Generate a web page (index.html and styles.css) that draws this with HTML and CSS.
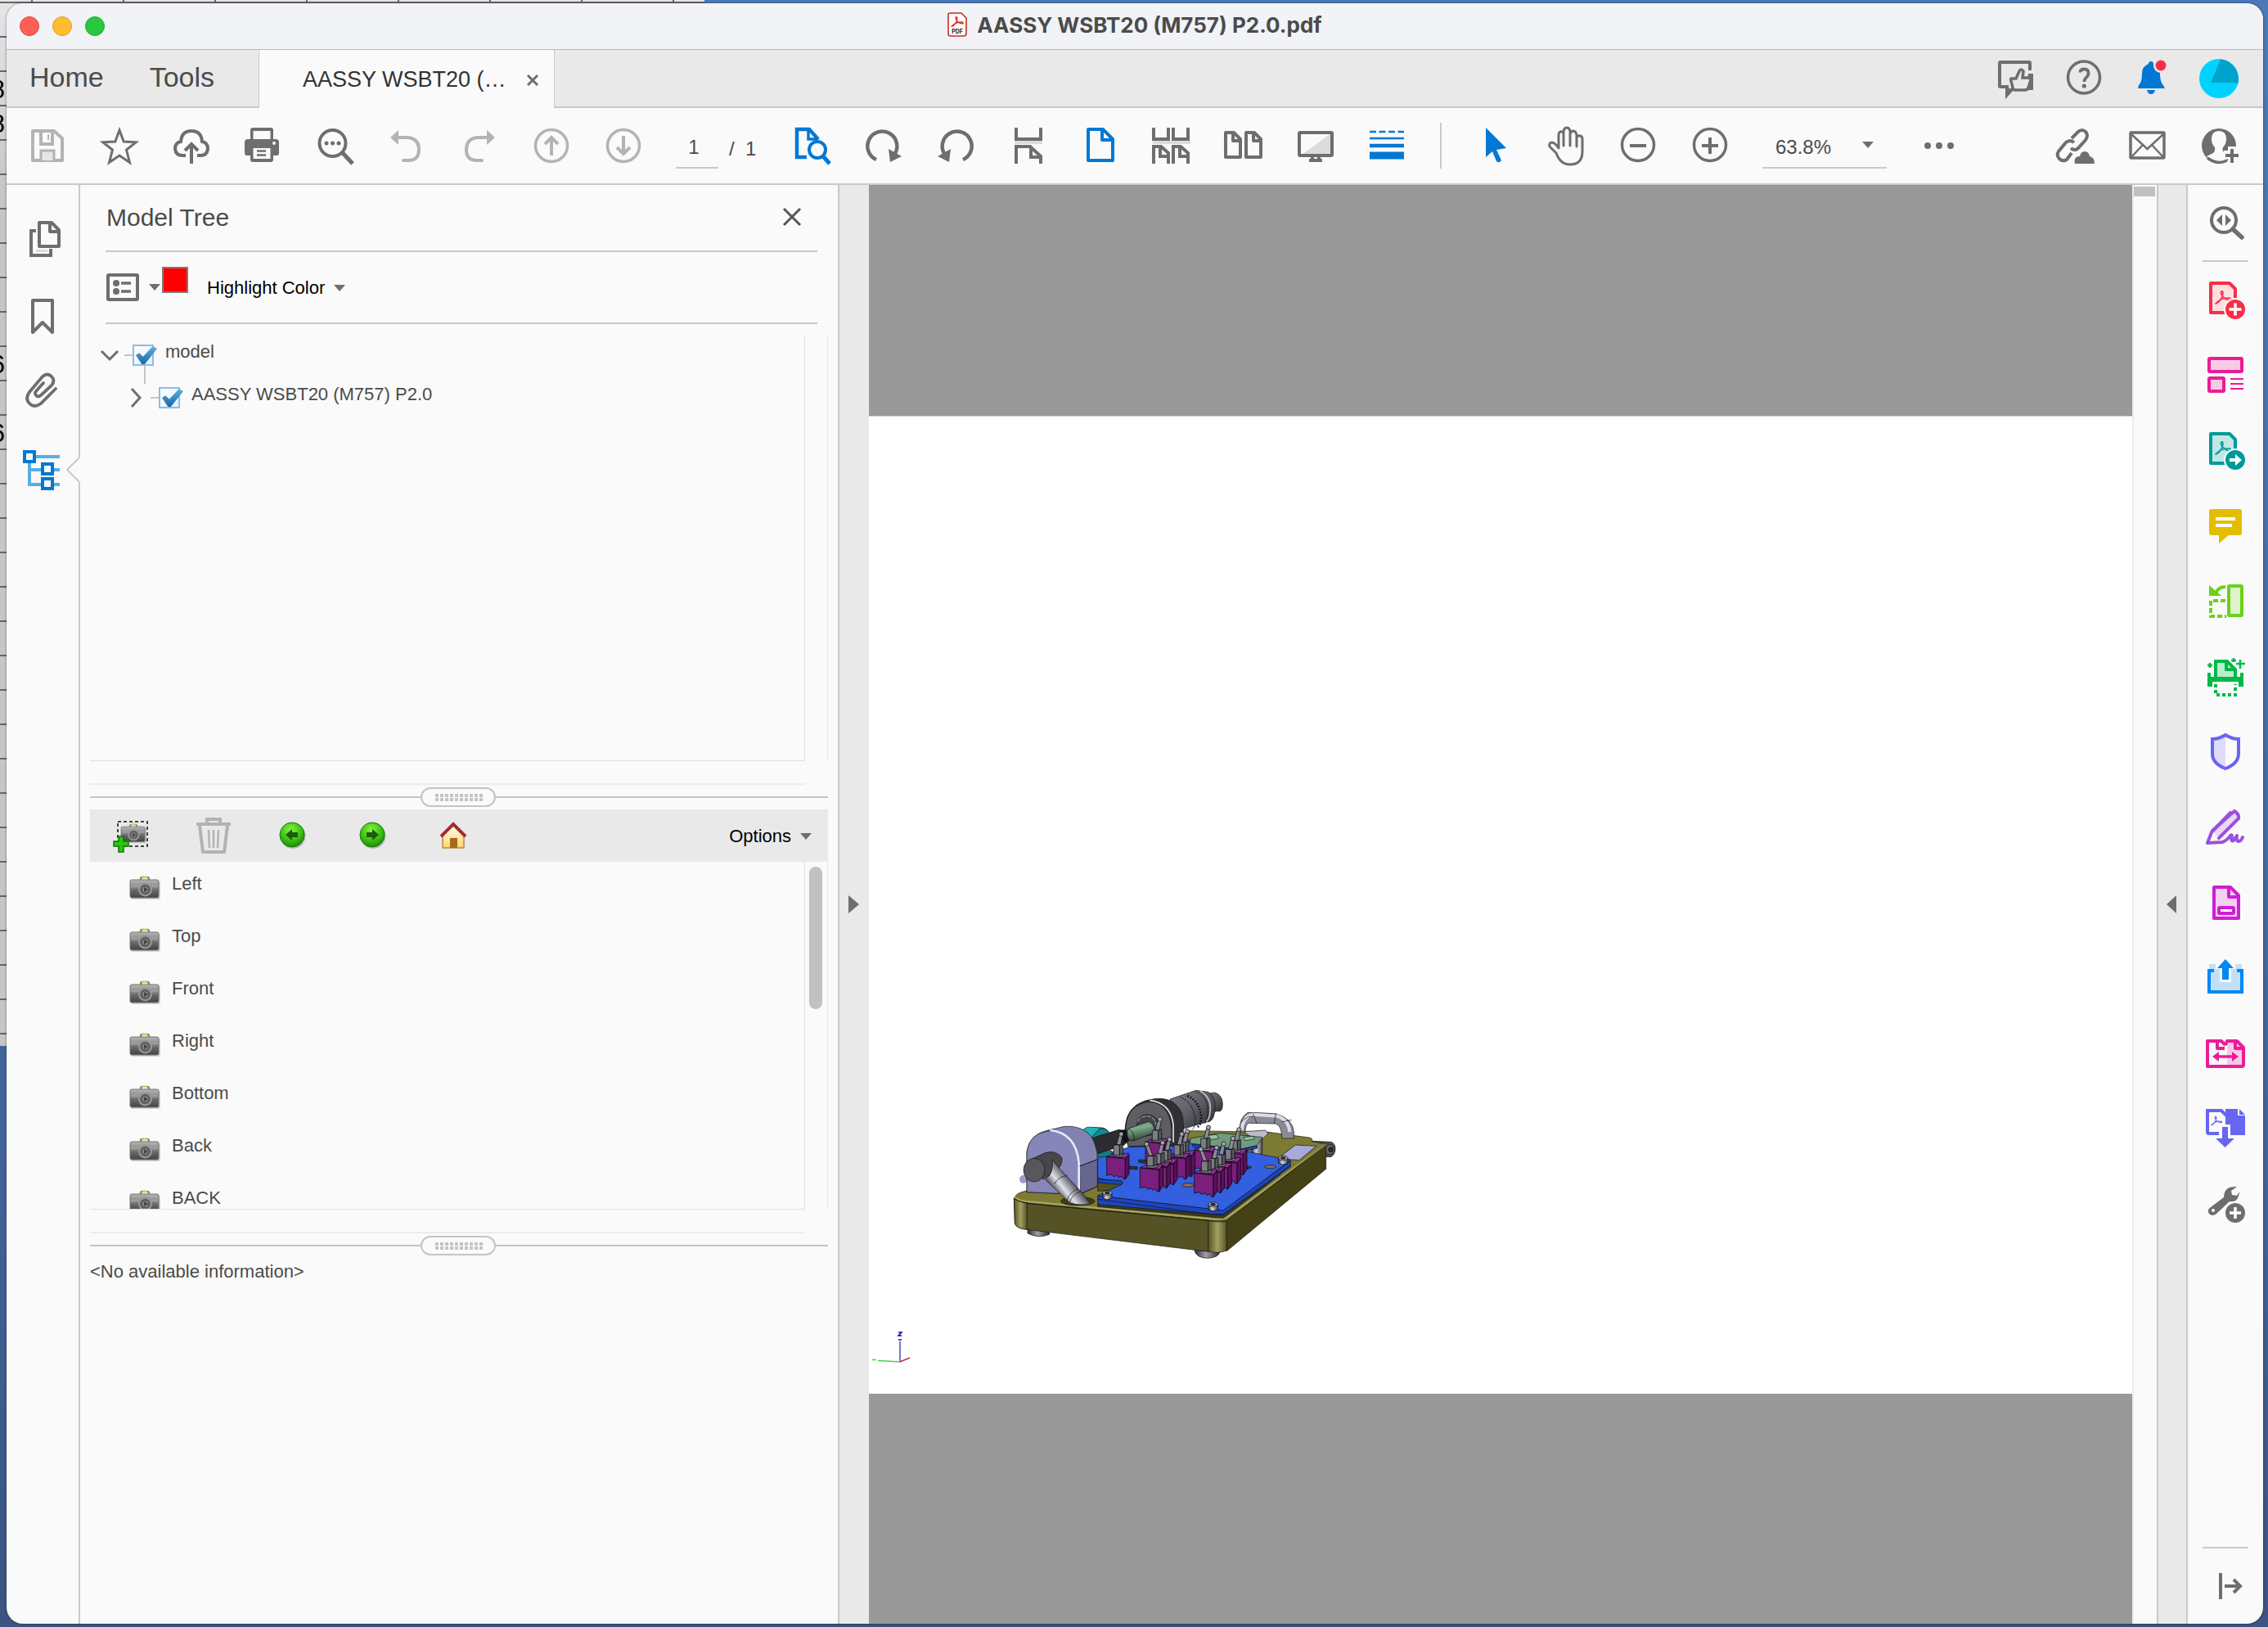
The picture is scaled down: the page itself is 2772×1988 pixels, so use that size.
FILE: index.html
```html
<!DOCTYPE html>
<html lang="en">
<head>
<meta charset="utf-8">
<title>AASSY WSBT20 (M757) P2.0.pdf</title>
<link rel="stylesheet" href="styles.css">
</head>
<body>
<svg class="defs" aria-hidden="true">
  <defs>
    <linearGradient id="camBody" x1="0" y1="0" x2="0" y2="1"><stop offset="0" stop-color="#b5b5b5"/><stop offset=".45" stop-color="#858585"/><stop offset=".55" stop-color="#6a6a6a"/><stop offset="1" stop-color="#444"/></linearGradient>
    <radialGradient id="greenBall" cx=".45" cy=".3" r=".8"><stop offset="0" stop-color="#8df04a"/><stop offset=".5" stop-color="#3fc412"/><stop offset="1" stop-color="#14780a"/></radialGradient>
    <linearGradient id="houseWall" x1="0" y1="0" x2="0" y2="1"><stop offset="0" stop-color="#fffdf0"/><stop offset="1" stop-color="#ffd66b"/></linearGradient>
    <symbol id="camera" viewBox="0 0 38 30">
      <rect x="2" y="7" width="36" height="22" rx="2" fill="#000" opacity=".15"/>
      <path d="M14 5V4q0-2 2-2h6q2 0 2 2v1" fill="none" stroke="#8f8f6a" stroke-width="2.500"/>
      <path d="M16 2.500h6" stroke="#f0e66a" stroke-width="2"/>
      <rect x="1" y="5" width="35" height="22" rx="2" fill="url(#camBody)" stroke="#777"/>
      <path d="M2 13h33" stroke="#c5c5c5" opacity=".6"/>
      <circle cx="19.500" cy="17" r="7.500" fill="#6c6c6c" stroke="#989898" stroke-width="2"/>
      <circle cx="19.500" cy="17" r="4.500" fill="#858585" stroke="#555" stroke-width="1.500"/>
      <path d="M18 14l5 3-5 3z" fill="#444"/>
    </symbol>
    <symbol id="acro" viewBox="0 0 20 18">
      <path d="M1 16c4-1 9-8 9-13 0-3-3-2.500-2.500 0 .6 4 6 8.500 10 8.500 2.500 0 2.500-2.500-.5-2.500-5 0-12 2-16 7z" fill="none" stroke="currentColor" stroke-width="1.700" stroke-linejoin="round"/>
    </symbol>
    <symbol id="grip" viewBox="0 0 92 24">
      <rect x="1" y="1" width="90" height="22" rx="11" fill="#fafafa" stroke="#c4c4c4" stroke-width="2"/>
      <path d="M18 10h58M18 15h58" stroke="#c4c4c4" stroke-width="4" stroke-dasharray="4 2"/>
    </symbol>
  </defs>
</svg>

<div class="sheet" aria-hidden="true">
  <div class="sheet-cells"><span>8</span><span>8</span><span class="skip">6</span><span class="next">6</span></div>
</div>

<div class="window">
  <header class="titlebar">
    <div class="lights"><button class="light red" aria-label="Close"></button><button class="light amber" aria-label="Minimize"></button><button class="light green" aria-label="Zoom"></button></div>
    <h1 class="title">
      <svg width="24" height="30" viewBox="0 0 24 30"><path d="M3 1h14l6 6v19q0 3-3 3H4q-3 0-3-3V3q0-2 2-2z" fill="#fff" stroke="#c0301c" stroke-width="1.600"/><svg x="4" y="5" width="16" height="14" color="#e2231a"><use href="#acro"/></svg><text x="12" y="25.500" text-anchor="middle" class="pdf-tag">PDF</text></svg>
      <span>AASSY WSBT20 (M757) P2.0.pdf</span>
    </h1>
  </header>

  <div class="tabbar">
    <nav class="nav"><a href="#home">Home</a><a href="#tools">Tools</a></nav>
    <div class="tab"><span class="tab-name">AASSY WSBT20 (…</span><button class="tab-close" aria-label="Close tab"><svg width="16" height="16" viewBox="0 0 16 16"><path d="M2 2l12 12M14 2L2 14" stroke="#6e6e6e" stroke-width="3"/></svg></button></div>
    <div class="account">
      <button class="icon" aria-label="Feedback"><svg viewBox="0 0 48 48"><path d="M42 14V5q0-1-1-1H6Q5 4 5 5v28q0 1 1 1h8v10l7-8" fill="none" stroke="#6e6e6e" stroke-width="4"/><path d="M13 33v14l8-8z" fill="#6e6e6e"/><path d="M40 18h6v20h-8z" fill="#6e6e6e"/><path d="M19 24h6l4-9q2-4 5 0l-1 8h7q3 0 3 3l-3 9q-1 3-4 3H24q-3 0-3-3l-2-8q-1-3 0-3z" fill="#e9e9e9" stroke="#6e6e6e" stroke-width="3.500"/></svg></button>
      <button class="icon" aria-label="Help"><svg viewBox="0 0 48 48"><circle cx="25" cy="22.500" r="19.500" fill="none" stroke="#6e6e6e" stroke-width="3.500"/><path d="M20.500 16.500q0-4 5-4t5 5q0 3-3 5.500-2 2-2 5" fill="none" stroke="#6e6e6e" stroke-width="3.800"/><circle cx="25.300" cy="33" r="2.600" fill="#6e6e6e"/></svg></button>
      <button class="icon" aria-label="Notifications"><svg viewBox="0 0 48 48"><path d="M21 6q0-3 3-3t3 3q8 3 8 12 0 10 4 14l2 4H8l1-4q4-4 4-14 0-9 8-12z" fill="#0078d4"/><path d="M19 38h10q-1 5-5 5t-5-5z" fill="#0078d4"/><circle cx="36" cy="8" r="9" fill="#e9e9e9"/><circle cx="36" cy="8" r="6.500" fill="#fa2d48"/></svg></button>
      <button class="icon" aria-label="Account"><svg viewBox="0 0 48 48"><circle cx="24" cy="24" r="24" fill="#00d2ff"/><path d="M26 0.500A24 24 0 0 1 47 31L44 29H14z" fill="#00a3cc"/></svg></button>
    </div>
  </div>

  <div class="toolbar">
    <div class="group">
      <button class="icon" aria-label="Save"><svg viewBox="0 0 48 48" fill="none" stroke="#b3b3b3" stroke-width="4"><path d="M6 6h26l10 9v27H6z" stroke-linejoin="round"/><path d="M16 6v16h14V6"/><path d="M25 10v7" stroke-width="2"/><path d="M16 42V30h16v12" fill="#e6e6e6" stroke-width="3"/></svg></button>
      <button class="icon" aria-label="Star"><svg viewBox="0 0 48 48"><path d="M24 5l5.200 14 15 .7-11.700 9.300 4 15.500L24 36l-12.500 8.500 4-15.500L3.800 19.700l15-.7z" fill="none" stroke="#6e6e6e" stroke-width="3"/></svg></button>
      <button class="icon" aria-label="Upload"><svg viewBox="0 0 48 48" fill="none" stroke="#6e6e6e" stroke-width="4"><path d="M17 36h-4q-8 0-9-8 0-8 7-9 1-13 13-13t13 13q7 1 7 9-1 8-9 8h-4"/><path d="M24 46V23M16 30l8-8 8 8"/></svg></button>
      <button class="icon" aria-label="Print"><svg viewBox="0 0 48 48"><path d="M8 16V5q0-3 3-3h22q3 0 3 3v11h3q4 0 4 4v13q0 3-3 3h-4v5q0 3-3 3H11q-3 0-3-3v-5H4q-3 0-3-3V20q0-4 4-4z" fill="#6e6e6e"/><path d="M11.500 6h21v10h-21zM11.500 27h21v13h-21z" fill="#fafafa"/><path d="M16 30.500h11M16 35.500h11" stroke="#6e6e6e" stroke-width="2.500"/><circle cx="37" cy="21" r="2" fill="#fafafa"/></svg></button>
      <button class="icon" aria-label="Find"><svg viewBox="0 0 48 48"><circle cx="20.500" cy="21" r="16" fill="none" stroke="#6e6e6e" stroke-width="4"/><path d="M32 32l13 14" stroke="#6e6e6e" stroke-width="5"/><g fill="#6e6e6e"><circle cx="13" cy="21" r="2.500"/><circle cx="20.500" cy="21" r="2.500"/><circle cx="28" cy="21" r="2.500"/></g></svg></button>
      <button class="icon" aria-label="Undo"><svg viewBox="0 0 48 48"><path d="M10 14h14q14 1 14 15 0 13-13 13h-6" fill="none" stroke="#b3b3b3" stroke-width="4" stroke-linecap="round"/><path d="M3 14l10-9v18z" fill="#b3b3b3"/></svg></button>
      <button class="icon" aria-label="Redo"><svg viewBox="0 0 48 48"><path d="M36 14H22Q8 15 8 29q0 13 13 13h6" fill="none" stroke="#b3b3b3" stroke-width="4" stroke-linecap="round"/><path d="M43 14L33 5v18z" fill="#b3b3b3"/></svg></button>
      <button class="icon" aria-label="Previous page"><svg viewBox="0 0 48 48" fill="none" stroke="#b3b3b3" stroke-width="3.500"><circle cx="24" cy="24" r="19.500"/><path d="M24 36V14M16 22l8-8 8 8" stroke-width="4"/></svg></button>
      <button class="icon" aria-label="Next page"><svg viewBox="0 0 48 48" fill="none" stroke="#b3b3b3" stroke-width="3.500"><circle cx="24" cy="24" r="19.500"/><path d="M24 12v22M16 26l8 8 8-8" stroke-width="4"/></svg></button>
    </div>
    <div class="pager"><input class="page-input" aria-label="Page number" value="1"><span class="page-total">/&nbsp; 1</span></div>
    <div class="group">
      <button class="icon" aria-label="Search page"><svg viewBox="0 0 48 48" fill="none" stroke="#0078d4" stroke-width="4.500"><path d="M18 38H6V4h15l10 11v1"/><path d="M20 4v12h12" stroke-width="3.500"/><circle cx="31" cy="29" r="10" stroke-width="4"/><path d="M38 37l8 9" stroke-width="5"/></svg></button>
      <button class="icon" aria-label="Rotate clockwise"><svg viewBox="0 0 48 48"><path d="M15 41A18 18 0 1 1 37 35" fill="none" stroke="#6e6e6e" stroke-width="4.500"/><path d="M30 28l16 9-14 7z" fill="#6e6e6e"/></svg></button>
      <button class="icon" aria-label="Rotate counterclockwise"><svg viewBox="0 0 48 48"><path d="M33 41A18 18 0 1 0 11 35" fill="none" stroke="#6e6e6e" stroke-width="4.500"/><path d="M18 28L2 37l14 7z" fill="#6e6e6e"/></svg></button>
      <button class="icon" aria-label="Fit width"><svg viewBox="0 0 48 48"><path d="M8 18h34v4H8z" fill="#dcdcdc"/><path d="M10 2v14h30V2M10 46V25h17l13 12v9M28 25v13h11" fill="none" stroke="#6e6e6e" stroke-width="4"/></svg></button>
      <button class="icon" aria-label="Single page"><svg viewBox="0 0 48 48"><path d="M10 4h18l12 12v26H10zM27 4v13h13" fill="none" stroke="#0078d4" stroke-width="4" stroke-linejoin="round"/></svg></button>
      <button class="icon" aria-label="Two page scrolling"><svg viewBox="0 0 48 48"><path d="M1 18h46v4H1z" fill="#dcdcdc"/><path d="M2 2v14h18V2M26 2v14h18V2M2 46V25h9l9 8v13M10 25v12h9M26 46V25h9l9 8v13M34 25v12h9" fill="none" stroke="#6e6e6e" stroke-width="4"/></svg></button>
      <button class="icon" aria-label="Two page view"><svg viewBox="0 0 48 48"><path d="M2 8h10l8 8v22H2zM11 8v10h8M27 8h10l8 8v22H27zM36 8v10h8" fill="none" stroke="#6e6e6e" stroke-width="4" stroke-linejoin="round"/></svg></button>
      <button class="icon" aria-label="Full screen"><svg viewBox="0 0 48 48"><path d="M43 9v25H8z" fill="#dcdcdc"/><rect x="4" y="8" width="40" height="28" rx="1" fill="none" stroke="#6e6e6e" stroke-width="4"/><path d="M16 42h16M20 36v6M28 36v6" stroke="#6e6e6e" stroke-width="4"/></svg></button>
      <button class="icon" aria-label="Line weights"><svg viewBox="0 0 48 48" stroke="#0078d4"><path d="M2 7h42" stroke-width="2.500" stroke-dasharray="8 3.500"/><path d="M2 15h42" stroke-width="2.500"/><path d="M2 24h42" stroke-width="4.500"/><path d="M2 36h42" stroke-width="9"/></svg></button>
    </div>
    <div class="divider"></div>
    <div class="group">
      <button class="icon" aria-label="Select"><svg viewBox="0 0 48 48"><path d="M14 2l25 25-12 2 6 13q-3 4-6 1l-5-12-8 7z" fill="#0078d4"/></svg></button>
      <button class="icon" aria-label="Hand"><svg viewBox="0 0 48 48"><path d="M12 33L4 25q-1-5 3-5 3 0 8 7V10q1-4 4-3 2 0 2 4V6q1-4 4-4t4 4v4q1-4 4-4t4 5v4q1-4 4-3 3 0 3 4v15q0 16-15 16-12 0-17-14zM21 10v14M29 9v15M37 12v13" fill="none" stroke="#6e6e6e" stroke-width="3" stroke-linecap="round" stroke-linejoin="round"/></svg></button>
      <button class="icon" aria-label="Zoom out"><svg viewBox="0 0 48 48" fill="none" stroke="#6e6e6e" stroke-width="3.500"><circle cx="24" cy="23" r="19.500"/><path d="M14 24h20" stroke-width="4"/></svg></button>
      <button class="icon" aria-label="Zoom in"><svg viewBox="0 0 48 48" fill="none" stroke="#6e6e6e" stroke-width="3.500"><circle cx="24" cy="23" r="19.500"/><path d="M14 24h20M24 14v20" stroke-width="4"/></svg></button>
    </div>
    <div class="zoom"><select class="zoom-select" aria-label="Zoom level"><option>63.8%</option></select><svg class="caret" viewBox="0 0 14 8"><path d="M0 0h14L7 8z"/></svg></div>
    <button class="icon" aria-label="More tools"><svg viewBox="0 0 48 48" fill="#6e6e6e"><circle cx="10" cy="24" r="4"/><circle cx="24" cy="24" r="4"/><circle cx="38" cy="24" r="4"/></svg></button>
    <div class="group share">
      <button class="icon" aria-label="Share link"><svg viewBox="0 0 48 48" fill="none" stroke="#6e6e6e" stroke-width="4"><path d="M20 15l8-8q5-4 9 0t0 10l-9 10q-4 4-9 0M20 33l-6 8q-5 3-9-1t-1-9l9-11q5-4 10 0"/><path d="M24 46q-2-9 6-9 1-6 6-6t6 6q6 1 6 9z" fill="#6e6e6e" stroke="none"/></svg></button>
      <button class="icon" aria-label="Email"><svg viewBox="0 0 48 48" fill="none" stroke="#6e6e6e" stroke-width="3.500"><rect x="4" y="8" width="41" height="31" rx="1"/><path d="M5 10l19.500 18L44 10M5 38l14-15M44 38L30 23" stroke-width="2.500"/></svg></button>
      <button class="icon" aria-label="Invite people"><svg viewBox="0 0 48 48"><circle cx="24" cy="24" r="21" fill="#6e6e6e"/><path d="M24 6q9 0 9 10 0 6-4 10-2 5 3 7l6 2-6 8q-8 3-17-1l-6-5 6-3q5-2 4-8-4-4-4-10 0-10 9-10z" fill="#fafafa"/><path d="M10 39q12 9 24 3" stroke="#6e6e6e" stroke-width="3.500" fill="none"/><path d="M30 35h20M40 25v24" stroke="#fafafa" stroke-width="10"/><path d="M32 36h16M40 28v17" stroke="#6e6e6e" stroke-width="4"/></svg></button>
    </div>
  </div>

  <main class="body">
    <aside class="rail-left">
      <button class="icon" aria-label="Page thumbnails"><svg viewBox="0 0 48 48" fill="none" stroke="#6e6e6e" stroke-width="4"><path d="M16 37h14v3H16z" fill="#dcdcdc" stroke="none"/><path d="M16 14h-6v30h24v-8"/><path d="M20 4h15l9 9v20H20zM33 4v11h11" stroke-linejoin="round"/></svg></button>
      <button class="icon" aria-label="Bookmarks"><svg viewBox="0 0 48 48" fill="none" stroke="#6e6e6e" stroke-width="4"><path d="M12 44V5h24v39L24 32z" stroke-linejoin="round"/></svg></button>
      <button class="icon" aria-label="Attachments"><svg viewBox="0 0 48 48" fill="none" stroke="#6e6e6e" stroke-width="3.800" stroke-linecap="round"><path d="M40 19L22 37q-8 6-14 0t0-14L24 4q6-5 11 0t0 11L22 27q-4 3-6 0t0-5l9-10"/></svg></button>
      <button class="icon active" aria-label="Model tree"><svg viewBox="0 0 48 48" fill="none"><path d="M14 8h31M8 14v28h14M8 24h37M32 42h13" stroke="#57aee6" stroke-width="4"/><g fill="#fafafa" stroke="#0078d4" stroke-width="4"><path d="M2 2h12v12H2zM24 17h12v12H24zM24 35h12v12H24z"/></g></svg><svg class="notch" viewBox="0 0 18 32"><path d="M18 0L2 16l16 16z" fill="#fafafa"/><path d="M17 1L2 16l15 15" fill="none" stroke="#c8c8c8" stroke-width="2"/></svg></button>
    </aside>

    <section class="panel">
      <div class="panel-head"><h2>Model Tree</h2><button class="panel-close" aria-label="Close panel"><svg viewBox="0 0 24 24"><path d="M2 2l20 20M22 2L2 22" stroke="#555" stroke-width="3"/></svg></button></div>
      <div class="panel-tools">
        <button class="list-btn" aria-label="Tree options"><svg width="40" height="34" viewBox="0 0 40 34"><rect x="2" y="2" width="36" height="30" rx="1" fill="none" stroke="#6e6e6e" stroke-width="4"/><circle cx="12" cy="12" r="4" fill="#6e6e6e"/><circle cx="12" cy="22" r="4" fill="#6e6e6e"/><path d="M18 12h12M18 22h12" stroke="#6e6e6e" stroke-width="3.500"/></svg><svg class="caret" viewBox="0 0 14 8"><path d="M0 0h14L7 8z"/></svg></button>
        <button class="swatch" aria-label="Highlight color swatch"></button>
        <button class="text-btn highlight">Highlight Color<svg class="caret" viewBox="0 0 14 8"><path d="M0 0h14L7 8z"/></svg></button>
      </div>

      <div class="pane tree-pane">
        <ul class="tree">
          <li><div class="node"><svg class="chev" viewBox="0 0 24 24"><path d="M2 7l10 10L22 7" fill="none" stroke="#6e6e6e" stroke-width="3"/></svg><span class="dash"></span><input type="checkbox" id="n1" checked><label for="n1">model</label></div>
            <ul class="branch">
              <li><div class="node"><svg class="chev" viewBox="0 0 24 24"><path d="M7 1l10 11L7 23" fill="none" stroke="#6e6e6e" stroke-width="3"/></svg><span class="dash"></span><input type="checkbox" id="n2" checked><label for="n2">AASSY WSBT20 (M757) P2.0</label></div></li>
            </ul>
          </li>
        </ul>
        <div class="track"></div>
      </div>
      <div class="hscroll"></div>
      <div class="splitter"><svg width="92" height="24"><use href="#grip"/></svg></div>

      <div class="views-bar">
        <button class="icon" aria-label="Add view"><svg viewBox="0 0 48 48"><rect x="7" y="7" width="36" height="30" fill="none" stroke="#444" stroke-width="2" stroke-dasharray="4 3"/><svg x="10" y="9" width="32" height="25"><use href="#camera"/></svg><path d="M8 25h6v6h6v6h-6v7H8v-7H2v-6h6z" fill="#2fc410" stroke="#0d7a06" stroke-width="1.500"/></svg></button>
        <button class="icon" aria-label="Delete view"><svg viewBox="0 0 48 48" fill="none" stroke="#b3b3b3"><path d="M5 10h42M18 9V4h16v5" stroke-width="4"/><path d="M9 12l4 32h26l4-32" stroke-width="4"/><path d="M20 17l1 22M26 17v22M32 17l-1 22" stroke-width="2.500"/></svg></button>
        <button class="icon" aria-label="Previous view"><svg viewBox="0 0 48 48"><circle cx="25" cy="24.500" r="15.500" fill="#000" opacity=".2"/><circle cx="24" cy="23" r="15" fill="url(#greenBall)" stroke="#127509"/><path d="M16 23l8-7v4h7v6h-7v4z" fill="#1c5c0c"/></svg></button>
        <button class="icon" aria-label="Next view"><svg viewBox="0 0 48 48"><circle cx="25" cy="24.500" r="15.500" fill="#000" opacity=".2"/><circle cx="24" cy="23" r="15" fill="url(#greenBall)" stroke="#127509"/><path d="M32 23l-8-7v4h-7v6h7v4z" fill="#1c5c0c"/></svg></button>
        <button class="icon" aria-label="Home view"><svg viewBox="0 0 48 48"><path d="M12 23L25 11l13 12v16H12z" fill="url(#houseWall)" stroke="#b5894a" stroke-width="1.500"/><path d="M21 27h9v12h-9z" fill="#a5691a"/><path d="M10 25L25 10l15 15" fill="none" stroke="#a32a33" stroke-width="4"/></svg></button>
        <button class="text-btn options">Options<svg class="caret" viewBox="0 0 14 8"><path d="M0 0h14L7 8z"/></svg></button>
      </div>
      <div class="pane views-pane">
        <ul class="views">
          <li><svg><use href="#camera"/></svg><span>Left</span></li>
          <li><svg><use href="#camera"/></svg><span>Top</span></li>
          <li><svg><use href="#camera"/></svg><span>Front</span></li>
          <li><svg><use href="#camera"/></svg><span>Right</span></li>
          <li><svg><use href="#camera"/></svg><span>Bottom</span></li>
          <li><svg><use href="#camera"/></svg><span>Back</span></li>
          <li><svg><use href="#camera"/></svg><span>BACK</span></li>
        </ul>
        <div class="track"><div class="thumb"></div></div>
      </div>
      <div class="hscroll"></div>
      <div class="splitter"><svg width="92" height="24"><use href="#grip"/></svg></div>
      <p class="info">&lt;No available information&gt;</p>
    </section>

    <button class="collapse left" aria-label="Collapse navigation pane"><svg width="14" height="22" viewBox="0 0 14 22"><path d="M0 0l13 11L0 22z" fill="#6e6e6e"/></svg></button>

    <section class="viewer">
      <div class="page">
        <svg class="model" viewBox="0 0 1320 720" role="img" aria-label="3D model of the assembly">
          <defs>
            <linearGradient id="oliveCorner"><stop offset="0" stop-color="#55531f"/><stop offset=".5" stop-color="#a3a160"/><stop offset="1" stop-color="#55531f"/></linearGradient>
            <linearGradient id="steel"><stop offset="0" stop-color="#3c3c42"/><stop offset=".4" stop-color="#d8d8e4"/><stop offset="1" stop-color="#44444c"/></linearGradient>
            <linearGradient id="foot"><stop offset="0" stop-color="#2c2c30"/><stop offset=".45" stop-color="#a0a0a6"/><stop offset="1" stop-color="#2c2c30"/></linearGradient>
            <linearGradient id="arm" gradientUnits="userSpaceOnUse" x1="200" y1="425" x2="262" y2="375"><stop offset="0" stop-color="#4a4a50"/><stop offset=".4" stop-color="#e2e2ee"/><stop offset="1" stop-color="#3c3c42"/></linearGradient>
            <linearGradient id="barrel" x1="0" y1="0" x2="1" y2="1"><stop offset="0" stop-color="#77777f"/><stop offset=".4" stop-color="#65656d"/><stop offset="1" stop-color="#2b2b30"/></linearGradient>
            <linearGradient id="greenRod" x1="0" y1="0" x2=".3" y2="1"><stop offset="0" stop-color="#4e6d57"/><stop offset=".4" stop-color="#7fae8c"/><stop offset="1" stop-color="#33473a"/></linearGradient>
            <g id="switch" stroke="#000" stroke-width="2">
              <path d="M0 45l25-12h57l-14 16z" fill="#9a2f9c"/>
              <path d="M0 45l68 8v75l-8-2-4-10-12 6-6-8-12 4-10-8-16 4z" fill="#7b1f7e"/>
              <path d="M68 53l14-15v70l-14 20z" fill="#561259"/>
              <ellipse cx="42" cy="39" rx="20" ry="7" fill="#77777f"/>
              <path d="M25 2h22v37H25z" fill="#7c7c84"/><path d="M47 2l12-4v36l-12 5z" fill="#55555c"/>
              <path d="M36 0l10-36 12 3-7 35z" fill="#8b8b93"/><circle cx="53" cy="-38" r="8" fill="#a4a4ac"/>
            </g>
            <g id="switchL" stroke="#000" stroke-width="2">
              <path d="M0 45l25-12h60l-14 16z" fill="#9a2f9c"/>
              <path d="M0 45l70 8v80l-8-2-4-10-12 6-6-8-12 4-10-8-18 4z" fill="#7b1f7e"/>
              <path d="M70 53l15-15v72l-15 22z" fill="#561259"/>
              <ellipse cx="44" cy="39" rx="22" ry="7" fill="#77777f"/>
              <path d="M26 2h24v36H26z" fill="#7c7c84"/><path d="M50 2l12-4v35l-12 5z" fill="#55555c"/>
              <path d="M33 1L20-36l11-5 16 40z" fill="#8b8b93"/><circle cx="24" cy="-42" r="8" fill="#a4a4ac"/>
            </g>
            <g id="bolt" stroke="#000" stroke-width="2"><path d="M-17 0v18q17 12 34 0V0z" fill="url(#steel)"/><ellipse rx="17" ry="8" fill="#b8b8c0"/><ellipse rx="9" ry="4" fill="#333"/></g>
          </defs>
          <g stroke="#111" stroke-width="2" stroke-linejoin="round">
            <path d="M108 572v16q38 20 80 4v-14z" fill="url(#foot)"/>
            <path d="M720 650q5 28 48 29 42-2 45-25z" fill="url(#foot)"/>
            <path d="M1150 250l70 3q16 5 16 25t-16 30l-30-2z" fill="#4b4b52"/><circle cx="1216" cy="281" r="18" fill="#66666e"/><circle cx="1220" cy="281" r="9" fill="#2b2b30"/>
            <path d="M60 462q0-22 45-30l600-220 285 5 150 20q16 4 10 14l42 8q12 5 10 16L838 545l-68-4-664-63q-46-6-46-16z" fill="#7d7b33"/>
            <path d="M58 460q8 14 48 19l664 62v114L106 574q-42-4-45-24z" fill="#555325"/>
            <path d="M58 458q8 12 48 18v98q-42-4-45-24z" fill="url(#oliveCorner)"/>
            <path d="M770 541q42 10 68 2v108q-30 12-68 3z" fill="url(#oliveCorner)"/>
            <path d="M838 543l364-278v87L838 653z" fill="#444116"/>
            <path d="M60 454q12 14 50 17l662 63q40 6 64-2l366-270" fill="none" stroke="#aaa863" stroke-width="6"/>
            <path d="M62 460q12 14 48 18l662 63q40 6 66-2l364-276" fill="none"/>
            <path d="M365 490l460 42 210-160V350L825 520 365 480z" fill="#3f3d18"/>
            <path d="M1025 314l65-50 76 4-62 52z" fill="#a9a9dc"/>
            <path d="M885 215q-2-50 30-70 40 0 105 5 60 18 64 66v24h-44q0-50-24-54l-98-2q-12 4-12 36z" fill="#8a8a94"/>
            <path d="M893 210q4-50 40-58l90 6q42 14 46 58" fill="none" stroke="#dcdce8" stroke-width="12"/>
            <path d="M891 180q24-24 44-20M1018 148l-6 37M934 148l14 36M1040 180l36-8" fill="none"/>
            <path d="M900 215l80-5 10 12-34 34z" fill="#bcbcc8"/>
            <path d="M930 240h38v72h-38z" fill="url(#steel)"/>
            <path d="M480 272l210-28 382 76-247 186-460-56 90-45-90-20V305z" fill="#3260e0"/>
            <path d="M365 450l460 54 247-182v22L825 522 365 482z" fill="#1f45bd"/>
            <path d="M365 463l415 55h45l247-180" fill="none"/>
            <path d="M365 389l85 6q12 6 2 14l-48 22-39 2z" fill="#55531f"/>
            <path d="M365 389l85 6q12 6 2 14-40 0-87-8z" fill="#1c43bd"/>
            <path d="M705 240l110-20 155 16-22 30-60 14-185-22z" fill="#6f9c7e"/><path d="M710 262l180 18 60-14v10l-62 14-170-16z" fill="#1c43bd"/>
            <path d="M760 230l40-4 10 14-40 6zM900 236l36-4 4 10-34 6z" fill="#9fc3ab"/>
            <path d="M310 210q10-14 35-11l38 2q25 6 24 30l-32 36-30-12z" fill="#1fb3b5"/><path d="M340 238l32-34q28-4 36 20l-34 40z" fill="#16898c"/><path d="M365 265l52 22v18l-52 4z" fill="#118084"/>
            <path d="M740 80l55-8q28 10 28 42t-20 26l-60 10z" fill="url(#barrel)"/>
            <path d="M630 96l95-32 45 6q32 20 24 70-4 40-30 40l-95 28z" fill="url(#barrel)"/>
            <path d="M694 84q42 18 50 72 2 38-18 44" fill="none" stroke-width="8" stroke-dasharray="5 6"/>
            <path d="M668 88q46 20 54 74 2 36-10 46M724 68q40 14 44 58 2 44-12 60" fill="none"/>
            <path d="M740 66q36 18 38 60 0 40-14 52" fill="none" stroke="#bcbccb" stroke-width="5"/>
            <path d="M466 240v-45q6-70 70-92 100-30 135 40 8 20 8 50v50l-30 25-170 3z" fill="#303035"/>
            <path d="M468 200q4-82 84-94 74 2 84 96v60l-160 8z" fill="#5d5d63"/>
            <path d="M556 100q76 10 86 88v66" fill="none" stroke="#e2e2ea" stroke-width="5"/>
            <path d="M508 192q6-40 38-40 40 2 42 44l-20 30-50 10z" fill="#44444a"/><path d="M512 178q10-20 36-20 28 4 32 36" fill="none" stroke="#b4b4be" stroke-width="3" stroke-dasharray="16 4"/>
            <path d="M340 240l102-32q30 0 34 30-2 18-14 26l-96 32z" fill="#2c2c30"/>
            <path d="M445 214l20-6q16 14 14 40l-18 6z" fill="#111"/>
            <path d="M478 204l72-26q22 6 24 40l-76 30q-10 2-16 0-16-22-4-44z" fill="url(#greenRod)"/><path d="M478 204q22 12 20 44" fill="none"/>
            <ellipse cx="92" cy="390" rx="14" ry="15" fill="#9a9ad0" stroke="none"/>
            <path d="M105 437V290q10-66 78-80l60-14q90-4 112 66 9 25 9 60v95l-64 28z" fill="#8282b2"/>
            <path d="M298 342l66-25v98l-64 28z" fill="#66668f"/>
            <path d="M105 437V290q10-74 92-78 92 8 100 120v113z" fill="#8686b8"/>
            <path d="M190 210q96 10 106 120v112" fill="none" stroke="#e8e8ff" stroke-width="8"/><path d="M298 342l66-25" fill="none"/>
            <ellipse cx="292" cy="470" rx="62" ry="16" fill="#3f3d18"/>
            <path d="M118 318l56-26q40-10 60 20 4 30-30 52l-40 26z" fill="#46464c"/>
            <path d="M198 318l30 36 84 90 26 36q-36 8-76-4L172 390q34-20 26-72z" fill="url(#arm)"/>
            <path d="M206 408q12-28 48-32M252 468q8-30 42-44M262 474q10-30 40-40" fill="none"/>
            <ellipse cx="132" cy="356" rx="39" ry="43" fill="#57575d"/>
            <g fill="#333"><path d="M480 342l30 2v10l-30-2zM515 318l40 2-10 12-30-4z"/></g>
            <ellipse cx="696" cy="411" rx="22" ry="7" fill="#8a6a5a"/><ellipse cx="998" cy="344" rx="22" ry="6" fill="#8a6a5a"/><ellipse cx="910" cy="346" rx="18" ry="5" fill="#333"/>
          </g>
          <use href="#switch" x="540" y="208"/>
          <use href="#switch" x="718" y="238"/>
          <use href="#switch" x="398" y="262"/>
          <use href="#switch" x="640" y="252"/>
          <use href="#switch" x="620" y="262"/>
          <use href="#switch" x="575" y="282"/>
          <use href="#switch" x="550" y="294"/>
          <use href="#switchL" x="520" y="303"/>
          <use href="#switch" x="830" y="246"/>
          <use href="#switch" x="808" y="278"/>
          <use href="#switch" x="774" y="298"/>
          <use href="#switch" x="748" y="312"/>
          <use href="#switchL" x="719" y="322"/>
          <use href="#bolt" x="400" y="440"/>
          <use href="#bolt" x="788" y="482"/>
          <use href="#bolt" x="1045" y="312"/>
        </svg>
        <svg class="axes" width="60" height="44" viewBox="0 0 60 44" fill="none"><path d="M38 37V12" stroke="#4a4ac0" stroke-width="1.500"/><path d="M36 10h4M36 1h4l-4 4h4" stroke="#1010a0" stroke-width="1.500"/><path d="M38 37L11 35.500M9 34.500H4" stroke="#4ecb4e" stroke-width="1.500"/><path d="M38 37l12-5" stroke="#c23030" stroke-width="1.500"/></svg>
      </div>
    </section>
    <div class="doc-scroll"><div class="doc-thumb"></div></div>
    <button class="collapse right" aria-label="Collapse tools pane"><svg width="12" height="22" viewBox="0 0 12 22"><path d="M12 0L0 11l12 11z" fill="#6e6e6e"/></svg></button>

    <aside class="rail-right">
      <button class="icon" aria-label="Search tools"><svg viewBox="0 0 48 48"><circle cx="22" cy="21" r="15" fill="none" stroke="#6e6e6e" stroke-width="4"/><path d="M33 32l11 10" stroke="#6e6e6e" stroke-width="5.500" stroke-linecap="round"/><path d="M20 14v14l-7-7zM24 14v14l7-7z" fill="#6e6e6e"/></svg></button>
      <hr>
      <div class="tools">
        <button class="icon" aria-label="Create PDF"><svg viewBox="0 0 48 48" color="#fa2d48"><path d="M6 3h23l7 7v29H6z" fill="#fddfe2" stroke="#fa2d48" stroke-width="4" stroke-linejoin="round"/><svg x="11" y="10" width="20" height="22"><use href="#acro"/></svg><circle cx="36" cy="35" r="14" fill="#fafafa"/><circle cx="36" cy="35" r="12" fill="#fa2d48"/><path d="M28.500 35h15M36 27.500v15" stroke="#fff" stroke-width="3.500"/></svg></button>
        <button class="icon" aria-label="Edit PDF"><svg viewBox="0 0 48 48" fill="#f7cbe6" stroke="#ec1c95" stroke-width="4"><rect x="4" y="3" width="40" height="16" rx="1"/><rect x="4" y="27" width="18" height="16" rx="1"/><path d="M30 28h16M30 34h16M30 40h16" stroke-width="2"/></svg></button>
        <button class="icon" aria-label="Export PDF"><svg viewBox="0 0 48 48" color="#009a9a"><path d="M6 3h23l7 7v29H6z" fill="#c0e6e6" stroke="#009a9a" stroke-width="4" stroke-linejoin="round"/><svg x="11" y="10" width="20" height="22"><use href="#acro"/></svg><circle cx="36" cy="35" r="14" fill="#fafafa"/><circle cx="36" cy="35" r="12" fill="#009a9a"/><path d="M29 33h7v-5l8 7-8 7v-5h-7z" fill="#fff"/></svg></button>
        <button class="icon" aria-label="Comment"><svg viewBox="0 0 48 48"><path d="M7 3h34q3 0 3 3v26q0 3-3 3H28L16 45V35H7q-3 0-3-3V6q0-3 3-3z" fill="#e5bd00"/><path d="M12 15h24M12 23h20" stroke="#fff" stroke-width="4"/></svg></button>
        <button class="icon" aria-label="Organize pages"><svg viewBox="0 0 48 48" fill="none" stroke="#6bd11a"><rect x="28" y="5" width="16" height="36" rx="1" fill="#def3cc" stroke-width="4"/><path d="M24 23H6v19h19" stroke-width="4" stroke-dasharray="6 3"/><path d="M24 6q-9 0-12 8" stroke-width="4"/><path d="M4 4v13h15z" fill="#6bd11a" stroke="none"/></svg></button>
        <button class="icon" aria-label="Scan and OCR"><svg viewBox="0 0 48 48" fill="none" stroke="#00b84a" stroke-width="4"><path d="M12 24V5h14l10 10v9" fill="#b9edcd"/><path d="M25 5v10h11"/><path d="M2 19h4v5h36v-5h4v17h-6v-6H8v6H2z" fill="#00b84a" stroke="none"/><path d="M12 33v13h24V33" stroke-dasharray="4 3"/><path d="M5 7v6M2 10h6M34 1v5M31 4h6M42 3v11M37 8h11" stroke-width="2.500"/></svg></button>
        <button class="icon" aria-label="Protect"><svg viewBox="0 0 48 48"><path d="M24 4v39Q8 36 8 26V9q9 0 16-5z" fill="#dedcfa"/><path d="M24 3q8 5 16 5v18q0 12-16 18Q8 38 8 26V8q8 0 16-5z" fill="none" stroke="#6865f0" stroke-width="4"/></svg></button>
        <button class="icon" aria-label="Fill and sign"><svg viewBox="0 0 48 48" fill="none" stroke="#9b51dd" stroke-width="4" stroke-linejoin="round" stroke-linecap="round"><path d="M16 37l24-24q1-5-5-9L8 28" fill="#e8d8f7"/><path d="M30 6L7 30 2 43l18-1q6-2 10-8 2-2 2 1-2 7 2 5l4-6q-1 7 2 7t5-5"/></svg></button>
        <button class="icon" aria-label="Redact"><svg viewBox="0 0 48 48" stroke="#cf1fd2" stroke-width="4" stroke-linejoin="round"><path d="M10 5h20l10 10v28H10z" fill="#f5d0f5"/><path d="M28 5v12h12" fill="none"/><rect x="16" y="30" width="18" height="7" rx="1" fill="#fff"/></svg></button>
        <button class="icon" aria-label="Share file"><svg viewBox="0 0 48 48"><path d="M4 7h40v34H4z" fill="#c1e0f8"/><path d="M10 15H4v26h40V15h-6" fill="none" stroke="#0088f5" stroke-width="4"/><path d="M12 2h24v11H12z" fill="#fafafa"/><path d="M17 10h14v19H17z" fill="#fafafa"/><path d="M24 1l10 11h-6v14h-8V12h-6z" fill="#0088f5"/></svg></button>
        <button class="icon" aria-label="Combine files"><svg viewBox="0 0 48 48" fill="none" stroke="#ec1c95" stroke-width="4" stroke-linejoin="round"><path d="M26 9h12l8 8v22H26z" fill="#f7cbe6" stroke="none"/><path d="M24 14l-5-5H2v31h42q2 0 2-2V17l-8-8H26l-2 5M14 9v9h9M36 9v9h9"/><path d="M12 28h24" stroke-width="3.500"/><path d="M16 22l-8 6 8 6zM32 22l8 6-8 6z" fill="#ec1c95" stroke="none"/></svg></button>
        <button class="icon" aria-label="Convert PDF"><svg viewBox="0 0 48 48" color="#6865f0"><path d="M24 0h15v8h9v24H30V19h-6z" fill="#6865f0"/><path d="M41 0l7 7h-7z" fill="#6865f0"/><path d="M16 30H4q-2 0-2-2V2h17l6 6" fill="none" stroke="#6865f0" stroke-width="4"/><svg x="6" y="8" width="14" height="14"><use href="#acro"/></svg><path d="M17 20h13v17H17z" fill="#fafafa"/><path d="M20 22h7v14h8L23.500 47 12 36h8z" fill="#6865f0"/></svg></button>
        <button class="icon" aria-label="More tools"><svg viewBox="0 0 48 48"><path d="M38 3l-7 5 1 5 6 1 3-5q-1 14-12 12L13 36q-5 4-9 0-3-5 2-8l16-12q0-14 16-13z" fill="#6e6e6e"/><circle cx="9" cy="32" r="2" fill="#fff"/><circle cx="36" cy="35" r="14" fill="#fafafa"/><circle cx="36" cy="35" r="12" fill="#6e6e6e"/><path d="M29 35h14M36 28v14" stroke="#fff" stroke-width="3.500"/></svg></button>
      </div>
      <div class="rail-foot"><hr><button class="icon" aria-label="Collapse pane"><svg viewBox="0 0 48 48"><path d="M18 8v32M23 24h18M34 16l8 8-8 8" fill="none" stroke="#6e6e6e" stroke-width="4"/></svg></button></div>
    </aside>
  </main>
</div>
</body>
</html>
```
FILE: styles.css
```css
* { box-sizing: border-box; }

body {
  margin: 0;
  height: 100vh;
  display: flex;
  overflow: hidden;
  background: linear-gradient(#4c79b8, #42639a 70%, #3b5480);
  font-family: "Liberation Sans", Arial, sans-serif;
  font-size: 22px;
  color: #4b4b4b;
}

h1, h2, p, ul { margin: 0; padding: 0; font-weight: normal; }
ul { list-style: none; }
a { color: inherit; text-decoration: none; }
button, input, select { font: inherit; color: inherit; }
button { border: 0; padding: 0; background: none; }
svg { display: block; flex: none; }
.defs { position: absolute; width: 0; height: 0; }

/* spreadsheet window lying behind */
.sheet {
  position: absolute;
  left: 0;
  top: 0;
  width: 861px;
  height: 1278px;
  background:
    repeating-linear-gradient(90deg, transparent 0 38px, #666 38px 40px, transparent 40px 112px) 0 0 / 100% 4px no-repeat,
    repeating-linear-gradient(transparent 0 2px, #666 2px 4px, transparent 4px 42px) 0 0 / 100% 100%,
    linear-gradient(#e6e6e6, #c6c6c6 240px);
}
.sheet-cells {
  width: 6px;
  padding-top: 88px;
  overflow: hidden;
  display: flex;
  flex-direction: column;
  align-items: flex-end;
  font-size: 32px;
  line-height: 42px;
  color: #000;
}
.sheet-cells .skip { margin-top: 252px; }
.sheet-cells .next { margin-top: 42px; }

.window {
  position: relative;
  flex: 1;
  margin: 4px 6px 4px 8px;
  display: flex;
  flex-direction: column;
  overflow: hidden;
  border-radius: 20px;
  background: #fafafa;
  box-shadow: 0 0 3px rgba(0, 0, 0, .5);
}

.titlebar {
  position: relative;
  height: 57px;
  flex: none;
  display: flex;
  align-items: center;
  justify-content: center;
  background: #f1f3f7;
  border-bottom: 1px solid #bdb8ba;
}
.lights {
  position: absolute;
  left: 16px;
  display: flex;
  gap: 16px;
}
.light { width: 24px; height: 24px; border-radius: 50%; }
.red { background: #ff5f57; border: 1px solid #e0443e; }
.amber { background: #febc2e; border: 1px solid #dfa023; }
.green { background: #28c840; border: 1px solid #1dad2b; }
.title {
  display: flex;
  align-items: center;
  gap: 12px;
  padding-bottom: 4px;
  font-family: Inter, "Liberation Sans", sans-serif;
  font-size: 26px;
  font-weight: 700;
}
.pdf-tag { font-size: 7px; font-weight: 700; fill: #222; }

.tabbar {
  height: 71px;
  flex: none;
  display: flex;
  align-items: center;
  background: #e9e9e9;
  border-bottom: 2px solid #c9c9c9;
}
.nav {
  width: 308px;
  padding: 0 0 4px 28px;
  display: flex;
  gap: 56px;
  font-size: 34px;
  line-height: 40px;
}
.tab {
  width: 362px;
  height: 71px;
  align-self: flex-start;
  display: flex;
  align-items: center;
  justify-content: space-between;
  padding: 2px 18px 0 53px;
  background: #fafafa;
  border: 1px solid #c9c9c9;
  border-width: 0 1px;
  font-size: 27px;
  color: #323232;
}
.tab-name { white-space: nowrap; }
.account { display: flex; gap: 35px; margin-left: auto; padding-right: 30px; }

.icon { position: relative; width: 48px; height: 48px; flex: none; }
.icon > svg:first-child { width: 48px; height: 48px; overflow: visible; }
.caret { width: 14px; height: 8px; fill: #6e6e6e; }

.toolbar {
  height: 94px;
  flex: none;
  display: flex;
  align-items: center;
  gap: 40px;
  padding: 0 30px 0 26px;
  border-bottom: 2px solid #c9c9c9;
  font-size: 24px;
}
.group { display: flex; gap: 40px; }
.share { margin-left: auto; }
.pager { width: 102px; height: 56px; display: flex; align-items: center; }
.page-input {
  width: 52px;
  height: 56px;
  padding: 6px 8px 0 0;
  border: 0;
  border-bottom: 2px solid #c9c9c9;
  background: none;
  text-align: center;
}
.page-total { padding: 8px 0 0 13px; white-space: nowrap; }
.divider { width: 2px; height: 56px; background: #c9c9c9; }
.zoom {
  width: 152px;
  height: 56px;
  display: grid;
  align-items: center;
  border-bottom: 2px solid #c9c9c9;
}
.zoom > * { grid-area: 1 / 1; }
.zoom .caret { justify-self: end; margin-right: 16px; pointer-events: none; }
.zoom-select {
  appearance: none;
  width: 152px;
  height: 54px;
  padding: 4px 0 0 16px;
  border: 0;
  background: none;
}

.body { flex: 1; min-height: 0; display: flex; }

.rail-left {
  width: 90px;
  flex: none;
  padding: 42px 20px 0;
  display: flex;
  flex-direction: column;
  gap: 46px;
  border-right: 2px solid #c9c9c9;
}
.notch { position: absolute; left: 52px; top: 8px; width: 18px; height: 32px; }

.panel {
  width: 928px;
  flex: none;
  border-right: 2px solid #c9c9c9;
}
.panel-head, .panel-tools {
  display: flex;
  align-items: center;
  margin: 0 25px 0 31px;
  border-bottom: 2px solid #c9c9c9;
}
.panel-head { height: 82px; justify-content: space-between; padding: 0 19px 2px 1px; }
.panel-head h2 { padding-top: 2px; font-size: 30px; line-height: 36px; }
.panel-close svg { width: 24px; height: 24px; }
.panel-tools { height: 88px; padding-left: 1px; }
.list-btn { display: flex; align-items: center; gap: 12px; }
.swatch {
  width: 32px;
  height: 32px;
  margin: 0 23px 18px 2px;
  background: #f00;
  border: 2px solid #8a7474;
}
.text-btn { display: flex; align-items: center; gap: 11px; padding-top: 2px; color: #000; }

.pane { display: grid; grid-template-columns: 1fr 28px; margin: 0 12px; overflow: hidden; }
.tree-pane { margin-top: 15px; height: 519px; }
.views-pane { height: 425px; }
.tree, .views { border: 1px solid #e0e0e0; border-width: 0 1px 1px 0; overflow: hidden; }
.track { border-right: 1px solid #e8e8e8; padding: 6px 5px; }
.thumb { width: 16px; height: 174px; border-radius: 8px; background: #c1c1c1; }
.hscroll { height: 29px; margin: 0 40px 0 12px; border-bottom: 2px solid #ececec; }
.splitter {
  height: 30px;
  margin: 0 12px;
  padding-right: 2px;
  display: flex;
  align-items: center;
  justify-content: center;
  background: linear-gradient(#c4c4c4, #c4c4c4) center / 100% 2px no-repeat;
}

.tree { padding-left: 12px; }
.node { height: 46px; display: flex; align-items: center; }
.node label { padding: 0 0 8px 14px; white-space: nowrap; }
.chev { width: 24px; height: 24px; }
.dash { width: 10px; height: 2px; margin-left: 6px; background: #c4c4c4; }
.branch { position: relative; padding: 6px 0 0 32px; }
.branch::before {
  content: "";
  position: absolute;
  left: 54px;
  top: -10px;
  width: 2px;
  height: 22px;
  background: #c4c4c4;
}
.node input {
  appearance: none;
  position: relative;
  width: 26px;
  height: 26px;
  margin: 0;
  border: 2px solid #86bfe6;
  background: linear-gradient(135deg, #fff, #e3f0fa);
}
.node input:checked::after {
  content: "";
  position: absolute;
  left: 2px;
  top: 0;
  width: 26px;
  height: 22px;
  background: linear-gradient(#5fb0e4, #1767a5);
  clip-path: polygon(0 50%, 16% 38%, 34% 58%, 80% 0, 100% 14%, 42% 100%, 28% 100%);
}

.views-bar {
  height: 64px;
  margin: 0 12px;
  padding: 0 20px 0 27px;
  display: flex;
  align-items: center;
  gap: 50px;
  background: #e9e9e9;
}
.options { margin-left: auto; }
.views { padding-left: 48px; }
.views li { height: 64px; display: flex; align-items: center; gap: 14px; }
.views svg { width: 38px; height: 30px; }
.views span { padding-bottom: 11px; }
.info { padding: 1px 12px 0; line-height: 32px; }

.collapse {
  flex: none;
  display: flex;
  align-items: center;
  justify-content: center;
  background: #e9e9e9;
}
.collapse.left { width: 36px; }
.collapse.right { width: 38px; border: 2px solid #c9c9c9; border-width: 0 2px; padding-right: 2px; }

.viewer {
  flex: 1;
  min-width: 0;
  display: flex;
  flex-direction: column;
  justify-content: center;
  background: #999;
}
.page {
  position: relative;
  width: 100%;
  aspect-ratio: 1544 / 1195;
  background: #fff;
  border-top: 1px solid #ccc;
}
.model { position: absolute; left: 158px; bottom: 152px; width: 440px; height: 240px; }
.axes { position: absolute; left: 0; bottom: 32px; overflow: visible; }

.doc-scroll { width: 30px; flex: none; padding: 2px 0 0; border-left: 2px solid #ececec; }
.doc-thumb { width: 26px; height: 12px; background: #c1c1c1; }

.rail-right {
  width: 92px;
  flex: none;
  padding: 22px 18px;
  display: flex;
  flex-direction: column;
  align-items: center;
}
.rail-right hr { width: 56px; height: 2px; flex: none; margin: 22px 0 23px; border: 0; background: #c9c9c9; }
.tools { display: flex; flex-direction: column; gap: 44px; }
.rail-foot { margin-top: auto; display: flex; flex-direction: column; align-items: center; }
.rail-foot hr { margin: 0 0 22px; }
```
